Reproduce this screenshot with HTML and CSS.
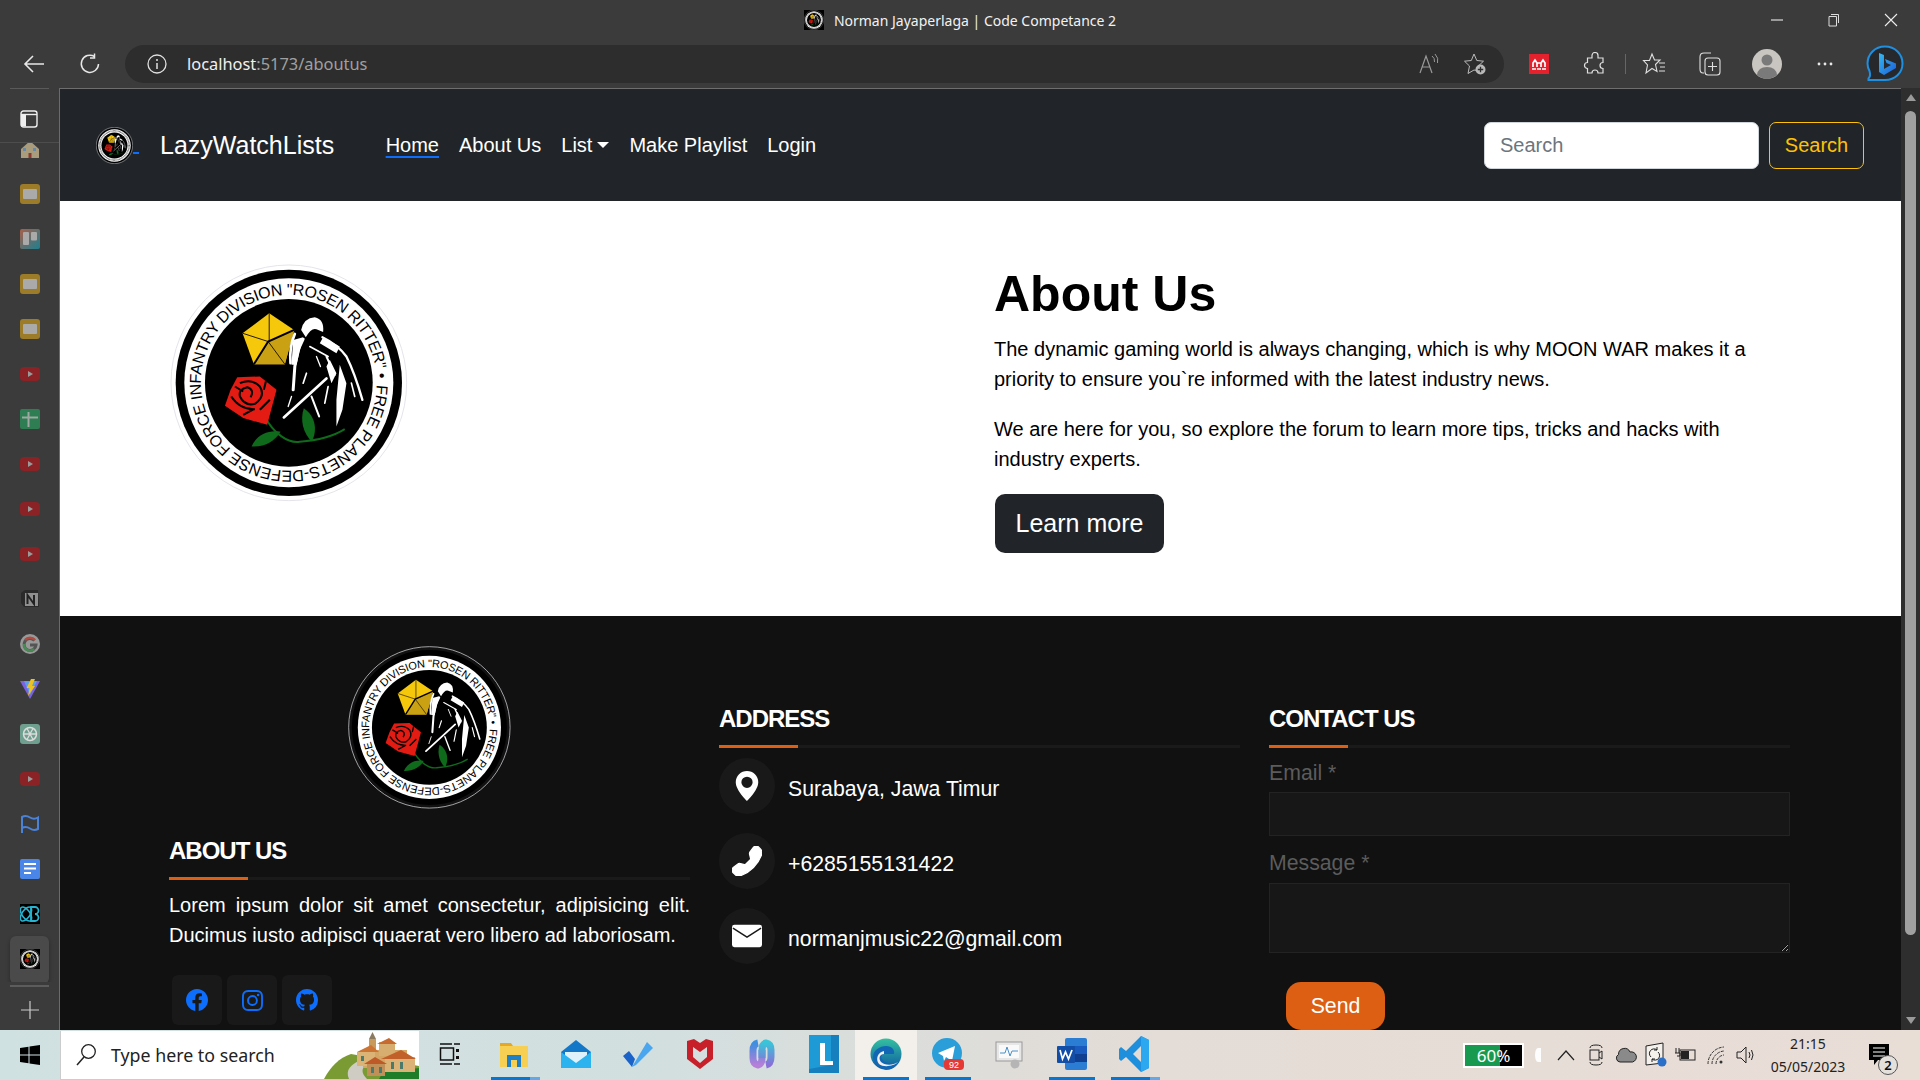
FILE: index.html
```html
<!DOCTYPE html>
<html lang="en">
<head>
  <meta charset="UTF-8">
  <title>Norman Jayaperlaga | Code Competance 2</title>
  <meta name="viewport" content="width=device-width, initial-scale=1.0">
  <link rel="stylesheet" href="styles.css">
</head>
<body>
  <!-- shared drawings -->
  <svg class="defs" aria-hidden="true">
    <defs>
      <linearGradient id="trelloBg" x1="0" y1="0" x2="1" y2="1"><stop offset="0" stop-color="#a8604c"/><stop offset="1" stop-color="#1d7f8f"/></linearGradient>
      <linearGradient id="edgeBlue" x1="0" y1="0" x2="0" y2="1"><stop offset="0" stop-color="#35c1a0"/><stop offset="1" stop-color="#0c59a4"/></linearGradient>
      <linearGradient id="bingB" x1="0" y1="0" x2="1" y2="1"><stop offset="0" stop-color="#36b8f0"/><stop offset="1" stop-color="#1b5ed8"/></linearGradient>
      <linearGradient id="copilotL" x1="0" y1="0" x2="0" y2="1"><stop offset="0" stop-color="#3c8ee0"/><stop offset="1" stop-color="#b67fd8"/></linearGradient>
      <linearGradient id="copilotR" x1="0" y1="0" x2="0" y2="1"><stop offset="0" stop-color="#39c4d8"/><stop offset="1" stop-color="#8a6fd8"/></linearGradient>
      <path id="sealCircle" d="M651 399 A264 264 0 1 1 123 399 A264 264 0 1 1 651 399"/>
      <symbol id="sealArt" viewBox="30 42 715 715">
        <circle cx="387" cy="399" r="340" fill="#000"/>
        <circle cx="387" cy="399" r="314" fill="#fff"/>
        <circle cx="387" cy="399" r="252" fill="#000"/>
        <polygon points="328,190 403,240 375,343 282,343 248,250" fill="#f6c80c"/>
        <polygon points="325,275 403,240 375,343 282,343" fill="#c9a113"/>
        <path d="M328 190V275M248 250L325 275M325 275L375 343" stroke="#221a00" stroke-width="3" fill="none"/>
        <path d="M282 343L325 275L403 240" stroke="#000" stroke-width="6" fill="none"/>
        <path d="M424 240Q432 204 465 202Q494 208 490 246L470 238Q455 232 438 262Z" fill="#fff"/>
        <path d="M400 270L430 262L410 345L395 345ZM490 262L540 290L530 310L480 280ZM510 330L530 370L515 400L500 350ZM540 345L560 400L548 480L530 530L530 450Z" fill="#fff"/>
        <g fill="none" stroke="#fff" stroke-linecap="round">
          <path d="M405 252Q388 290 392 340" stroke-width="8"/>
          <path d="M430 268L415 300L405 350L400 420" stroke-width="9"/>
          <path d="M488 262Q535 285 560 320Q585 370 608 450" stroke-width="7"/>
          <path d="M450 290L505 320" stroke-width="5"/>
          <path d="M500 320L525 375" stroke-width="6"/>
          <path d="M470 320L482 350" stroke-width="4"/>
          <path d="M575 400L585 440" stroke-width="5"/>
          <path d="M455 440L478 500" stroke-width="6"/>
          <path d="M505 410L495 460" stroke-width="5"/>
          <path d="M430 400L440 370" stroke-width="5"/>
          <path d="M372 503L500 386" stroke-width="8"/>
          <path d="M395 440L385 470" stroke-width="4"/>
        </g>
        <path d="M315 500C340 550 385 582 420 576C470 572 520 560 555 538" stroke="#0f6a1b" stroke-width="6" fill="none"/>
        <path d="M275 590C290 555 325 540 362 546C345 575 315 592 275 590Z" fill="#0f6a1b"/>
        <path d="M432 475C470 500 472 545 456 575C430 550 420 510 432 475Z" fill="#0f6a1b"/>
        <path d="M232 382L300 380L350 420L322 525L250 505L195 468L212 420Z" fill="#e31b12"/>
        <path d="M240 400Q275 385 300 410Q318 440 285 462Q255 470 240 440Q235 418 262 412Q285 420 272 442M214 440Q240 480 285 478M300 480L330 450M250 495L282 478M318 395L312 420M225 410L250 425" stroke="#000" stroke-width="6" fill="none"/>
      </symbol>
      <symbol id="sealLarge" viewBox="30 42 715 715">
        <circle cx="387" cy="399" r="354" fill="none" stroke="#e4e4ea" stroke-width="3"/>
        <use href="#sealArt" x="30" y="42" width="715" height="715"/>
        <text class="seal-text"><textPath href="#sealCircle" textLength="1640" startOffset="6">FREE PLANETS-DEFENSE FORCE INFANTRY DIVISION "ROSEN RITTER" •</textPath></text>
      </symbol>
      <symbol id="sealSmall" viewBox="30 42 715 715">
        <use href="#sealArt" x="30" y="42" width="715" height="715"/>
        <circle cx="387" cy="399" r="283" fill="none" stroke="#666" stroke-width="30" stroke-dasharray="14 10"/>
        <circle cx="387" cy="399" r="352" fill="none" stroke="#ddd" stroke-width="8"/>
      </symbol>
      <symbol id="tileYellow" viewBox="0 0 20 20"><rect width="20" height="20" rx="3" fill="#9c7c28"/><rect x="3" y="5" width="14" height="10" rx="1" fill="#aaa"/></symbol>
      <symbol id="tileTube" viewBox="0 0 20 20"><rect y="3" width="20" height="14" rx="4" fill="#8b2226"/><polygon points="8,7 13,10 8,13" fill="#9a9a9a"/></symbol>
    </defs>
  </svg>

  <div class="window">
    <header class="titlebar">
      <div></div>
      <div class="titlebar-text">
        <span class="favicon"><svg class="fill"><use href="#sealSmall"/></svg></span>
        <span>Norman Jayaperlaga | Code Competance 2</span>
      </div>
      <div class="win-controls">
        <svg width="14" height="14" viewBox="0 0 14 14"><path d="M1 7H13" stroke="#ddd" stroke-width="1.2"/></svg>
        <svg width="14" height="14" viewBox="0 0 14 14"><path d="M4 1.5H11.5V10M2 3.5H9.5V13H2Z" stroke="#ddd" fill="none"/></svg>
        <svg width="14" height="14" viewBox="0 0 14 14"><path d="M1 1L13 13M13 1L1 13" stroke="#eee" stroke-width="1.1"/></svg>
      </div>
    </header>

    <div class="toolbar">
      <div class="tool-cell">
        <svg width="22" height="20" viewBox="0 0 22 20"><path d="M21 10H2M10 2L2 10L10 18" stroke="#e8e8e8" stroke-width="1.6" fill="none"/></svg>
      </div>
      <div class="tool-cell">
        <svg width="22" height="22" viewBox="0 0 22 22"><path d="M15.5 3.5A8.6 8.6 0 1 0 19.5 11" stroke="#e8e8e8" stroke-width="1.5" fill="none"/><path d="M15.5 0.5V5H11" stroke="#e8e8e8" stroke-width="1.5" fill="none"/></svg>
      </div>
      <div class="address">
        <svg width="20" height="20" viewBox="0 0 20 20"><circle cx="10" cy="10" r="9" stroke="#e0e0e0" stroke-width="1.3" fill="none"/><path d="M10 9V15" stroke="#e0e0e0" stroke-width="1.5"/><circle cx="10" cy="6" r="1" fill="#e0e0e0"/></svg>
        <div class="address-url">localhost<span class="address-dim">:5173/aboutus</span></div>
        <div class="address-tools">
          <svg width="22" height="22" viewBox="0 0 22 22"><path d="M2 20L8 3L14 20M4.500 14H11.500" stroke="#999" stroke-width="1.2" fill="none"/><path d="M14 3Q17 5 16.500 9M17 1Q21 5 19.500 10" stroke="#999" fill="none"/></svg>
          <svg width="24" height="24" viewBox="0 0 24 24"><path d="M11 2L13.800 8.500L20.500 9.200L15.500 13.800L16.500 19L11 18L5 21.500L6.500 14L1.500 9.200L8.300 8.500Z" stroke="#bbb" stroke-width="1" fill="none"/><circle cx="17.500" cy="17.500" r="5" fill="#b8b8b8"/><path d="M17.500 14.800V20.200M14.800 17.500H20.200" stroke="#2d2d2d" stroke-width="1.300"/></svg>
        </div>
      </div>
      <div class="tool-cell">
        <svg width="20" height="20" viewBox="0 0 20 20"><rect width="20" height="20" fill="#e6212e"/><path d="M4 13V9L6 6L8 9V13M12 13V9L14 6L16 9V13M8 9H12M3 15H7M8 15H12M13 15H17" stroke="#fff" stroke-width="1.700" fill="none"/></svg>
      </div>
      <div class="tool-cell">
        <svg width="24" height="24" viewBox="0 0 24 24"><path d="M9 3.500A3 3 0 0 1 15 3.500V6H20V10.500A3 3 0 0 0 20 16.500V21H15A3 3 0 0 0 9 21H4.500V16.500A3 3 0 0 1 4.500 10.500V6H9Z" stroke="#e0e0e0" stroke-width="1.200" fill="none"/></svg>
      </div>
      <div class="tool-sep"></div>
      <div class="tool-cell">
        <svg width="24" height="24" viewBox="0 0 24 24"><path d="M10 2L12.500 8H18L13.500 12.500L15 19.500L10 16.500L4 21L5.500 13L1.500 8.500H7.500Z" stroke="#e0e0e0" stroke-width="1.100" fill="none"/><path d="M17 11H23M18 15H23M17 19H23" stroke="#e0e0e0" stroke-width="1.100"/></svg>
      </div>
      <div class="tool-cell">
        <svg width="24" height="26" viewBox="0 0 24 26"><path d="M6 22H5Q2 22 2 18V6Q2 2 6 2H13" stroke="#e0e0e0" stroke-width="1.100" fill="none"/><rect x="7" y="7" width="15" height="17" rx="3" stroke="#e0e0e0" stroke-width="1.100" fill="#3b3b3b"/><path d="M14.500 11V20M10 15.500H19" stroke="#e0e0e0" stroke-width="1.100"/></svg>
      </div>
      <div class="tool-cell tool-cell-wide">
        <svg width="30" height="30" viewBox="0 0 30 30"><circle cx="15" cy="15" r="15" fill="#c9c5c0"/><circle cx="15" cy="11" r="5.500" fill="#7a7a7a"/><path d="M5 26Q6 18 15 18Q24 18 25 26Q20 30 15 30Q10 30 5 26Z" fill="#7a7a7a"/></svg>
      </div>
      <div class="tool-cell tool-cell-wide">
        <svg width="18" height="6" viewBox="0 0 18 6"><circle cx="3" cy="3" r="1.400" fill="#e8e8e8"/><circle cx="9" cy="3" r="1.400" fill="#e8e8e8"/><circle cx="15" cy="3" r="1.400" fill="#e8e8e8"/></svg>
      </div>
      <div class="tool-cell tool-cell-bing">
        <svg width="38" height="38" viewBox="0 0 38 38"><path d="M19 1.500C29 1.500 36.500 9 36.500 18.500C36.500 28 29 35 19 35H2.500V33.500Q5 31 3.500 26Q1.500 22.500 1.500 18.500C1.500 9 9 1.500 19 1.500Z" stroke="#1f8fe0" stroke-width="2" fill="#26282c"/><path d="M13 8L18 10V24L25 20L20.500 18L19 14L30 18.500V23L18 30L13 27Z" fill="url(#bingB)"/></svg>
      </div>
    </div>

    <div class="main">
      <aside class="sidebar">
        <div class="sidebar-top">
          <svg width="18" height="18" viewBox="0 0 18 18"><rect x="1" y="1" width="16" height="16" rx="2.500" stroke="#eee" stroke-width="1.400" fill="none"/><path d="M1 4.500H17" stroke="#eee" stroke-width="1.400"/><rect x="1" y="4.500" width="5" height="12" fill="#eee"/></svg>
        </div>
        <div class="tab-list">
          <div class="tab tab-clipped">
            <svg class="tab-ico" viewBox="0 0 20 20"><path d="M1 10L10 2L19 10V19H1Z" fill="#a89c7c"/><rect x="3" y="9" width="3" height="3" fill="#6688aa"/><rect x="13" y="9" width="3" height="3" fill="#6688aa"/><rect x="8.500" y="14" width="3" height="5" fill="#8a3a30"/></svg>
          </div>
          <div class="tab"><svg class="tab-ico"><use href="#tileYellow"/></svg></div>
          <div class="tab"><svg class="tab-ico" viewBox="0 0 20 20"><rect width="20" height="20" rx="2" fill="url(#trelloBg)"/><rect x="3" y="3" width="6" height="13" rx="1" fill="#aaa"/><rect x="11" y="3" width="6" height="8.500" rx="1" fill="#aaa"/></svg></div>
          <div class="tab"><svg class="tab-ico"><use href="#tileYellow"/></svg></div>
          <div class="tab"><svg class="tab-ico"><use href="#tileYellow"/></svg></div>
          <div class="tab"><svg class="tab-ico"><use href="#tileTube"/></svg></div>
          <div class="tab"><svg class="tab-ico" viewBox="0 0 20 20"><rect width="20" height="20" rx="2" fill="#2f7d53"/><path d="M2 8.500H18M8.500 3V18" stroke="#9fa8a2" stroke-width="2"/></svg></div>
          <div class="tab"><svg class="tab-ico"><use href="#tileTube"/></svg></div>
          <div class="tab"><svg class="tab-ico"><use href="#tileTube"/></svg></div>
          <div class="tab"><svg class="tab-ico"><use href="#tileTube"/></svg></div>
          <div class="tab"><svg class="tab-ico" viewBox="0 0 20 20"><path d="M1 4L5 1H18L19 18H4L1 14Z" fill="#2a2a2a"/><rect x="5" y="4" width="13" height="13" fill="#8f8f8f"/><path d="M7.500 15V6L14 15V6" stroke="#222" stroke-width="2" fill="none"/></svg></div>
          <div class="tab"><svg class="tab-ico" viewBox="0 0 20 20"><circle cx="10" cy="10" r="10" fill="#999"/><path d="M14.500 6.500A6 6 0 1 0 16 11H10" stroke="#555" stroke-width="3" fill="none"/><path d="M15 6A6.500 6.500 0 0 0 5 6" stroke="#b24a40" stroke-width="2.500" fill="none"/><path d="M4 10A6 6 0 0 0 14 15" stroke="#4a8a55" stroke-width="2.500" fill="none"/></svg></div>
          <div class="tab"><svg class="tab-ico" viewBox="0 0 20 20"><polygon points="0,2 20,2 10,20" fill="#7d62e0"/><polygon points="4,2 17,2 10,16" fill="#5aa0e8"/><polygon points="11,0 15,0 12,7 15,7 8,17 9.500,9 6.500,9" fill="#eec020"/></svg></div>
          <div class="tab"><svg class="tab-ico" viewBox="0 0 20 20"><rect width="20" height="20" rx="3" fill="#6f9f8f"/><circle cx="10" cy="10" r="6.500" stroke="#dcdcdc" stroke-width="1.500" fill="none"/><path d="M7 4.500L13 15.500M13 4.500L7 15.500M3.500 10H16.500" stroke="#dcdcdc" stroke-width="1.300"/></svg></div>
          <div class="tab"><svg class="tab-ico"><use href="#tileTube"/></svg></div>
          <div class="tab"><svg class="tab-ico" viewBox="0 0 20 20"><path d="M2 19V3Q6 1 10 3.500Q14 6 18 3.500V15Q14 17 10 14.500Q6 12 2 14" stroke="#4a82d8" stroke-width="2" fill="none"/></svg></div>
          <div class="tab"><svg class="tab-ico" viewBox="0 0 20 20"><rect width="20" height="20" rx="2" fill="#4a86e8"/><path d="M4 5H16M4 9.500H16M4 14H11" stroke="#fff" stroke-width="2"/></svg></div>
          <div class="tab"><svg class="tab-ico" viewBox="0 0 20 20"><rect width="20" height="20" fill="#000"/><ellipse cx="6" cy="10" rx="4" ry="8" stroke="#27b4d0" stroke-width="1.500" fill="none" transform="rotate(35 6 10)"/><ellipse cx="6" cy="10" rx="4" ry="8" stroke="#27b4d0" stroke-width="1.500" fill="none" transform="rotate(-35 6 10)"/><path d="M11 3H15A3.500 3.500 0 0 1 15 10A3.500 3.500 0 0 1 15 17H11Z" stroke="#27b4d0" stroke-width="1.800" fill="none"/></svg></div>
          <div class="tab tab-active"><span class="tab-seal"><svg class="fill"><use href="#sealSmall"/></svg></span></div>
        </div>
        <div class="sidebar-rule"></div>
        <div class="sidebar-add">
          <svg width="18" height="18" viewBox="0 0 18 18"><path d="M9 0V18M0 9H18" stroke="#ccc" stroke-width="1.200"/></svg>
        </div>
      </aside>

      <div class="page">
        <nav class="navbar">
          <a class="brand-logo"><svg class="fill"><use href="#sealSmall"/></svg></a>
          <span class="brand-gap"></span>
          <a class="brand">LazyWatchLists</a>
          <ul class="nav-links">
            <li class="nav-link nav-link-active">Home</li>
            <li class="nav-link">About Us</li>
            <li class="nav-link nav-caret">List</li>
            <li class="nav-link">Make Playlist</li>
            <li class="nav-link">Login</li>
          </ul>
          <form class="nav-search">
            <input class="nav-search-input" type="text" placeholder="Search">
            <button class="nav-search-btn" type="button">Search</button>
          </form>
        </nav>

        <section class="about">
          <svg class="about-img"><use href="#sealLarge"/></svg>
          <div class="about-text">
            <h1>About Us</h1>
            <p>The dynamic gaming world is always changing, which is why MOON WAR makes it a priority to ensure you`re informed with the latest industry news.</p>
            <p>We are here for you, so explore the forum to learn more tips, tricks and hacks with industry experts.</p>
            <button class="learn-btn" type="button">Learn more</button>
          </div>
        </section>

        <footer class="footer">
          <div class="footer-col footer-col-about">
            <svg class="footer-logo"><use href="#sealLarge"/></svg>
            <h4 class="footer-title">ABOUT US</h4>
            <p class="footer-lorem">Lorem ipsum dolor sit amet consectetur, adipisicing elit. Ducimus iusto adipisci quaerat vero libero ad laboriosam.</p>
            <div class="socials">
              <a class="social"><svg width="22" height="22" viewBox="0 0 16 16" fill="#0d6efd"><path d="M16 8.049c0-4.446-3.582-8.05-8-8.05C3.58 0-.002 3.603-.002 8.05c0 4.017 2.926 7.347 6.75 7.951v-5.625h-2.03V8.05H6.75V6.275c0-2.017 1.195-3.131 3.022-3.131.876 0 1.791.157 1.791.157v1.98h-1.009c-.993 0-1.303.621-1.303 1.258v1.51h2.218l-.354 2.326H9.25V16c3.824-.604 6.75-3.934 6.75-7.951z"/></svg></a>
              <a class="social"><svg width="21" height="21" viewBox="0 0 16 16" fill="#0d6efd"><path d="M8 0C5.829 0 5.556.01 4.703.048 3.85.088 3.269.222 2.76.42a3.917 3.917 0 0 0-1.417.923A3.927 3.927 0 0 0 .42 2.76C.222 3.268.087 3.85.048 4.7.01 5.555 0 5.827 0 8.001c0 2.172.01 2.444.048 3.297.04.852.174 1.433.372 1.942.205.526.478.972.923 1.417.444.445.89.719 1.416.923.51.198 1.09.333 1.942.372C5.555 15.99 5.827 16 8 16s2.444-.01 3.298-.048c.851-.04 1.434-.174 1.943-.372a3.916 3.916 0 0 0 1.416-.923c.445-.445.718-.891.923-1.417.197-.509.332-1.09.372-1.942C15.99 10.445 16 10.173 16 8s-.01-2.445-.048-3.299c-.04-.851-.175-1.433-.372-1.941a3.926 3.926 0 0 0-.923-1.417A3.911 3.911 0 0 0 13.24.42c-.51-.198-1.092-.333-1.943-.372C10.443.01 10.172 0 7.998 0h.003zm-.717 1.442h.718c2.136 0 2.389.007 3.232.046.78.035 1.204.166 1.486.275.373.145.64.319.92.599.28.28.453.546.598.92.11.281.24.705.275 1.485.039.843.047 1.096.047 3.231s-.008 2.389-.047 3.232c-.035.78-.166 1.203-.275 1.485a2.47 2.47 0 0 1-.599.919c-.28.28-.546.453-.92.598-.28.11-.704.24-1.485.276-.843.038-1.096.047-3.232.047s-2.39-.009-3.233-.047c-.78-.036-1.203-.166-1.485-.276a2.478 2.478 0 0 1-.92-.598 2.48 2.48 0 0 1-.6-.92c-.109-.281-.24-.705-.275-1.485-.038-.843-.046-1.096-.046-3.233 0-2.136.008-2.388.046-3.231.036-.78.166-1.204.276-1.486.145-.373.319-.64.599-.92.28-.28.546-.453.92-.598.282-.11.705-.24 1.485-.276.738-.034 1.024-.044 2.515-.045v.002zm4.988 1.328a.96.96 0 1 0 0 1.92.96.96 0 0 0 0-1.92zm-4.27 1.122a4.109 4.109 0 1 0 0 8.217 4.109 4.109 0 0 0 0-8.217zm0 1.441a2.667 2.667 0 1 1 0 5.334 2.667 2.667 0 0 1 0-5.334z"/></svg></a>
              <a class="social"><svg width="22" height="22" viewBox="0 0 16 16" fill="#0d6efd"><path d="M8 0C3.58 0 0 3.58 0 8c0 3.54 2.29 6.53 5.47 7.59.4.07.55-.17.55-.38 0-.19-.01-.82-.01-1.49-2.01.37-2.53-.49-2.69-.94-.09-.23-.48-.94-.82-1.13-.28-.15-.68-.52-.01-.53.63-.01 1.08.58 1.23.82.72 1.21 1.87.87 2.33.66.07-.52.28-.87.51-1.07-1.78-.2-3.64-.89-3.64-3.95 0-.87.31-1.59.82-2.15-.08-.2-.36-1.02.08-2.12 0 0 .67-.21 2.2.82.64-.18 1.32-.27 2-.27.68 0 1.36.09 2 .27 1.53-1.04 2.2-.82 2.2-.82.44 1.1.16 1.92.08 2.12.51.56.82 1.27.82 2.15 0 3.07-1.87 3.75-3.65 3.95.29.25.54.73.54 1.48 0 1.07-.01 1.93-.01 2.2 0 .21.15.46.55.38A8.012 8.012 0 0 0 16 8c0-4.42-3.58-8-8-8z"/></svg></a>
            </div>
          </div>

          <div class="footer-col footer-col-low">
            <h4 class="footer-title">ADDRESS</h4>
            <div class="address-rows">
              <div class="address-row">
                <span class="address-ico"><svg width="30" height="30" viewBox="0 0 16 16" fill="#fff"><path d="M8 16s6-5.686 6-10A6 6 0 0 0 2 6c0 4.314 6 10 6 10zm0-7a3 3 0 1 1 0-6 3 3 0 0 1 0 6z"/></svg></span>
                <span class="address-val">Surabaya, Jawa Timur</span>
              </div>
              <div class="address-row">
                <span class="address-ico"><svg class="flip" width="30" height="30" viewBox="0 0 16 16" fill="#fff" stroke="#fff" stroke-width=".7"><path d="M1.885.511a1.745 1.745 0 0 1 2.61.163L6.29 2.98c.329.423.445.974.315 1.494l-.547 2.19a.678.678 0 0 0 .178.643l2.457 2.457a.678.678 0 0 0 .644.178l2.189-.547a1.745 1.745 0 0 1 1.494.315l2.306 1.794c.829.645.905 1.87.163 2.611l-1.034 1.034c-.74.74-1.846 1.065-2.877.702a18.634 18.634 0 0 1-7.01-4.42 18.634 18.634 0 0 1-4.42-7.009c-.362-1.03-.037-2.137.703-2.877L1.885.511z"/></svg></span>
                <span class="address-val">+6285155131422</span>
              </div>
              <div class="address-row">
                <span class="address-ico"><svg width="30" height="30" viewBox="0 0 16 16"><rect y="2" width="16" height="12" rx="1.300" fill="#fff"/><path d="M0.500 3.800L8 8.600L15.500 3.800" stroke="#191919" stroke-width=".8" fill="none"/></svg></span>
                <span class="address-val">normanjmusic22@gmail.com</span>
              </div>
            </div>
          </div>

          <div class="footer-col footer-col-low">
            <h4 class="footer-title">CONTACT US</h4>
            <form class="contact-form">
              <label class="contact-label">Email *</label>
              <input class="contact-input" type="text">
              <label class="contact-label contact-label-second">Message *</label>
              <textarea class="contact-area"></textarea>
              <button class="send-btn" type="button">Send</button>
            </form>
          </div>
        </footer>
      </div>

      <div class="scrollbar">
        <span class="scroll-up"></span>
        <span class="scroll-thumb"></span>
        <span class="scroll-down"></span>
      </div>
    </div>

    <div class="taskbar">
      <div class="start">
        <svg width="20" height="20" viewBox="0 0 20 20" fill="#000"><path d="M0 3L8.500 1.800V9.500H0ZM9.500 1.600L20 0V9.500H9.500ZM0 10.500H8.500V18.200L0 17ZM9.500 10.500H20V20L9.500 18.400Z"/></svg>
      </div>
      <div class="task-search">
        <svg width="22" height="24" viewBox="0 0 22 24"><circle cx="13.500" cy="8.500" r="6.800" stroke="#222" stroke-width="1.300" fill="none"/><path d="M9 14L2 22" stroke="#222" stroke-width="1.500"/></svg>
        <span class="task-search-text">Type here to search</span>
        <svg class="task-search-art" width="96" height="49" viewBox="0 0 96 49">
          <path d="M1 49C8 36 16 28 28 24L96 36V49Z" fill="#7a9a34"/>
          <path d="M26 49C22 40 28 34 38 30L44 34C38 38 38 43 44 49Z" fill="#cfccc4"/>
          <path d="M60 42L96 38V49H56Z" fill="#1f7d2a"/>
          <rect x="46" y="9" width="7" height="18" fill="#c89a5c"/>
          <polygon points="46,9 53,9 49.500,2" fill="#8a7a60"/>
          <rect x="40" y="20" width="44" height="18" fill="#d4a666"/>
          <rect x="56" y="12" width="16" height="14" fill="#d8ae70"/>
          <polygon points="54,14 74,14 66,8" fill="#c76a30"/>
          <polygon points="34,22 56,22 48,15" fill="#cc7433"/>
          <rect x="34" y="22" width="18" height="14" fill="#dcb377"/>
          <rect x="62" y="27" width="30" height="15" fill="#dcb377"/>
          <polygon points="58,29 93,29 78,20" fill="#c2602a"/>
          <rect x="44" y="33" width="18" height="13" fill="#c09058"/>
          <polygon points="41,34 64,34 52,27" fill="#bd5a28"/>
          <path d="M68 32h3v7h-3zM77 32h3v7h-3zM48 37h3v6h-3zM56 37h3v6h-3zM38 26h3v5h-3z" fill="#4c7a6a"/>
        </svg>
      </div>

      <div class="task-apps">
        <div class="task-app task-app-first"><svg width="24" height="26" viewBox="0 0 24 26"><path d="M2 3H14M2 23H14M16 3H22M16 23H22" stroke="#111" stroke-width="1.500"/><rect x="2.500" y="7" width="13" height="12" stroke="#111" stroke-width="1.500" fill="none"/><path d="M19.500 8V11M19.500 15V18" stroke="#111" stroke-width="3"/></svg></div>
        <div class="task-app task-app-open task-app-split"><svg width="28" height="28" viewBox="0 0 28 28"><path d="M0 3H11L13 6H0Z" fill="#e4a726"/><rect y="6" width="28" height="21" fill="#f7cf52"/><rect x="7" y="15" width="14" height="12" fill="#1f80c8"/><rect x="11" y="20" width="6" height="7" fill="#f7cf52"/></svg></div>
        <div class="task-app"><svg width="30" height="30" viewBox="0 0 30 30"><polygon points="15,1 30,13 30,29 0,29 0,13" fill="#1478c8"/><polygon points="4,13 26,13 26,21 15,27 4,21" fill="#dff2fb"/><polygon points="0,13 15,24 30,13 30,29 0,29" fill="#2bb3ef"/></svg></div>
        <div class="task-app"><svg width="32" height="26" viewBox="0 0 32 26"><polygon points="1,15 7,10 13,18 10,26" fill="#1a63c8"/><polygon points="10,26 25,1 31,7 14,24" fill="#4aa6ee"/></svg></div>
        <div class="task-app"><svg width="26" height="30" viewBox="0 0 26 30"><path d="M0 2L7 0L13 4L19 0L26 2V20L13 30L0 20ZM6 8V18L13 24L20 18V8L13 13Z" fill="#c8202a" fill-rule="evenodd"/></svg></div>
        <div class="task-app"><svg width="26" height="30" viewBox="0 0 26 30"><path d="M9 4Q4 5 4 12V19Q4 25 9 26Q13 25 13 19V11" stroke="url(#copilotL)" stroke-width="7" fill="none"/><path d="M17 26Q22 25 22 18V11Q22 5 17 4Q13 5 13 11V19" stroke="url(#copilotR)" stroke-width="7" fill="none"/></svg></div>
        <div class="task-app"><svg width="30" height="38" viewBox="0 0 30 38"><rect width="30" height="38" fill="#1e9ad6"/><polygon points="22,0 30,0 30,38 0,38 0,34 22,30" fill="#1580bd"/><path d="M11 8H16V26H24V30H11Z" fill="#fff"/></svg></div>
        <div class="task-app task-app-open task-app-current"><svg width="32" height="32" viewBox="0 0 32 32"><circle cx="16" cy="16" r="15.500" fill="url(#edgeBlue)"/><path d="M3 19C3 12 10 8 16 8C22 8 25 12 24 16H14C11 16 10 20 14 23C20 27 26 26 29 23C27 29 21 32 16 32C10 30 3 26 3 19Z" fill="#1267b5"/><path d="M14 16C10 16 8 20 11 24C14 27 22 28 28 24C24 28 14 30 9 26C5 21 8 14 14 13Z" fill="#f3efea"/></svg></div>
        <div class="task-app task-app-open"><svg width="34" height="34" viewBox="0 0 34 34"><circle cx="16" cy="16" r="15" fill="#2a9ed8"/><path d="M7 16L24 9L21 24L15 20L13 24L12 19Z" fill="#fff"/><rect x="13" y="22" width="20" height="11" rx="4" fill="#e53935"/><text class="tg-count" x="23" y="31">92</text></svg></div>
        <div class="task-app"><svg width="30" height="30" viewBox="0 0 30 30"><rect x="1" y="3" width="26" height="19" fill="#e6e6e6" stroke="#999"/><rect x="4" y="6" width="20" height="13" fill="#f9f9f9"/><path d="M5 14L10 14L12 8L15 17L17 12L23 12" stroke="#4a90c8" fill="none"/><circle cx="20" cy="25" r="4.500" fill="#b5b5b5"/></svg></div>
        <div class="task-app task-app-open"><svg width="30" height="32" viewBox="0 0 30 32"><rect x="8" width="22" height="32" rx="2" fill="#2b7cd3"/><rect x="8" y="8" width="22" height="8" fill="#185abd"/><rect x="8" y="16" width="22" height="8" fill="#103f91"/><rect y="8" width="18" height="17" rx="1" fill="#124ea8"/><path d="M3 12L5.500 21L8.500 14L11.500 21L15 12" stroke="#fff" stroke-width="1.700" fill="none"/></svg></div>
        <div class="task-app task-app-open task-app-split"><svg width="30" height="36" viewBox="0 0 30 36"><path d="M22 0L30 4V32L22 36L7 21L2 25L0 23V13L2 11L7 15ZM22 10L14 18L22 26Z" fill="#1e8fdc" fill-rule="evenodd"/><path d="M22 0L30 4V32L22 36Z" fill="#2ba8f0"/></svg></div>
      </div>

      <div class="tray">
        <div class="battery">
          <span class="battery-text">60%</span>
        </div>
        <div class="tray-speck"><span></span></div>
        <div class="tray-ico"><svg width="18" height="12" viewBox="0 0 18 12"><path d="M1 11L9 2L17 11" stroke="#222" stroke-width="1.200" fill="none"/></svg></div>
        <div class="tray-ico"><svg width="16" height="22" viewBox="0 0 16 22"><path d="M2 4Q2 1 8 1Q14 1 14 4M2 18Q2 21 8 21Q14 21 14 18" stroke="#222" fill="none"/><rect x="2" y="6" width="9" height="10" stroke="#222" fill="none"/><path d="M11 9L14 7V15L11 13" stroke="#222" fill="none"/></svg></div>
        <div class="tray-ico"><svg width="22" height="18" viewBox="0 0 22 18"><path d="M5 16A4 4 0 0 1 3.500 8.500A6 6 0 0 1 15 6A4.500 4.500 0 0 1 17.500 16Z" stroke="#222" fill="#8a8a8a"/></svg></div>
        <div class="tray-ico"><svg width="22" height="26" viewBox="0 0 22 26"><path d="M1 4L18 1V21L1 23Z" stroke="#222" fill="#f4f0ec"/><path d="M6 15A4 4 0 0 1 12 8M13 10A4 4 0 0 1 7 17M12 5V8H9M7 20V17H10" stroke="#222" fill="none"/><circle cx="17" cy="20" r="4.500" fill="#2b6fc8"/></svg></div>
        <div class="tray-ico"><svg width="22" height="18" viewBox="0 0 22 18"><rect x="5" y="4" width="15" height="10" stroke="#222" fill="none"/><rect x="6" y="5" width="8" height="8" fill="#222"/><path d="M1 2V7M4 2V7M0 7H5V10H2" stroke="#222" fill="none"/></svg></div>
        <div class="tray-ico"><svg width="20" height="20" viewBox="0 0 20 20"><path d="M2 19A17 17 0 0 1 18 2M6 19A13 13 0 0 1 18 6M10 19A9 9 0 0 1 18 10" stroke="#333" fill="none" stroke-dasharray="3 1"/><circle cx="15" cy="17" r="1.500" fill="#333"/></svg></div>
        <div class="tray-ico"><svg width="20" height="20" viewBox="0 0 20 20"><path d="M1 7H5L10 2V18L5 13H1Z" stroke="#222" fill="none"/><path d="M13 7Q15 10 13 13M15.500 5Q18.500 10 15.500 15" stroke="#222" fill="none"/></svg></div>
        <div class="clock"><span>21:15</span><span>05/05/2023</span></div>
        <div class="notif">
          <svg width="20" height="22" viewBox="0 0 20 22"><path d="M0 0H20V16H9L5 21V16H0Z" fill="#000"/><path d="M4 4H16M4 8H16M4 12H16" stroke="#fff" stroke-width="1.200"/></svg>
          <span class="notif-badge">2</span>
        </div>
      </div>
    </div>
  </div>
</body>
</html>
```

FILE: styles.css
```css
* { box-sizing: border-box; }
html, body { margin: 0; padding: 0; }
body { width: 1920px; height: 1080px; overflow: hidden; font-family: "Liberation Sans", Arial, sans-serif; background: #3b3b3b; }
svg { display: block; flex-shrink: 0; }
.defs { position: absolute; width: 0; height: 0; }
.fill { width: 100%; height: 100%; }
.seal-text { font-family: "Liberation Sans", Arial, sans-serif; font-size: 48px; fill: #000; }
.tg-count { font-family: "Liberation Sans", Arial, sans-serif; font-size: 9px; fill: #fff; text-anchor: middle; }

.window { display: flex; flex-direction: column; width: 1920px; height: 1080px; }

/* browser chrome */
.titlebar { display: grid; grid-template-columns: 1fr auto 1fr; align-items: center; height: 44px; padding-bottom: 4px; background: #3b3b3b; }
.titlebar-text { display: flex; align-items: center; gap: 10px; color: #f2f2f2; font-family: "Noto Sans", sans-serif; font-size: 14px; }
.favicon { width: 20px; height: 20px; background: #000; }
.win-controls { display: flex; justify-content: flex-end; gap: 43px; padding-right: 22px; }

.toolbar { display: flex; align-items: flex-start; height: 44px; padding-top: 1px; padding-left: 6px; background: #3b3b3b; }
.tool-cell { display: flex; align-items: center; justify-content: center; width: 56px; height: 38px; }
.tool-cell-wide { width: 58px; }
.tool-cell-bing { width: 62px; }
.tool-sep { width: 1px; height: 20px; margin-top: 9px; margin-left: 2px; background: #666; }
.address { display: flex; align-items: center; width: 1379px; height: 38px; margin-left: 7px; margin-right: 7px; padding-left: 22px; padding-right: 17px; background: #2d2d2d; border-radius: 19px; }
.address-url { margin-left: 20px; padding-bottom: 1px; color: #f0f0f0; font-family: "Noto Sans", sans-serif; font-size: 16.4px; }
.address-dim { color: #a0a0a0; }
.address-tools { display: flex; align-items: center; gap: 23px; margin-left: auto; }

.main { display: flex; height: 942px; overflow: hidden; }

.sidebar { display: flex; flex-direction: column; flex: 0 0 60px; border-right: 1px solid #6b6b6b; background: #3b3b3b; overflow: hidden; }
.sidebar-top { display: flex; align-items: center; justify-content: center; flex: 0 0 54px; margin: 0 10px; padding-top: 7px; padding-right: 1px; border-top: 1px solid #5a5a5a; }
.tab-list { flex: 0 0 840px; overflow: hidden; border-top: 1px solid #4d4d4d; }
.tab { display: flex; align-items: center; justify-content: center; height: 45px; }
.tab-clipped { margin-top: -16.5px; }
.tab-ico { width: 20px; height: 20px; }
.tab-active { position: relative; }
.tab-active::before { content: ""; position: absolute; left: 10px; right: 10px; top: -1px; bottom: -2px; background: #4a4a4a; border-radius: 6px; box-shadow: 0 2px 4px rgba(0, 0, 0, .3); }
.tab-seal { position: relative; width: 20px; height: 20px; background: #000; }
.sidebar-rule { height: 2px; margin: 3px 10px 0; background: #5c5c5c; }
.sidebar-add { display: flex; flex: 1; align-items: center; justify-content: center; padding-top: 3px; }

.scrollbar { display: flex; flex-direction: column; align-items: center; flex: 0 0 19px; background: #2e2e2e; }
.scroll-up { width: 0; height: 0; margin-top: 6px; border-left: 5px solid transparent; border-right: 5px solid transparent; border-bottom: 7px solid #9a9a9a; }
.scroll-thumb { width: 11px; height: 824px; margin-top: 10px; background: #a0a0a0; border-radius: 6px; }
.scroll-down { width: 0; height: 0; margin-top: auto; margin-bottom: 6px; border-left: 5px solid transparent; border-right: 5px solid transparent; border-top: 7px solid #9a9a9a; }

/* the site */
.page { flex: 1; min-width: 0; height: 942px; overflow: hidden; background: #fff; }

.navbar { display: flex; align-items: center; height: 113px; padding-left: 36px; padding-right: 37px; background: #212529; border-top: 1px solid #6e6e6e; }
.brand-logo { width: 37px; height: 37px; }
.brand-gap { align-self: center; width: 6px; height: 2px; margin-top: 15px; background: #0d6efd; }
.brand { margin-left: 21px; color: #fff; font-size: 25px; }
.nav-links { display: flex; margin: 0 0 0 41.500px; padding: 0; list-style: none; }
.nav-link { padding: 0 10px; color: #fff; font-size: 20px; line-height: 30px; }
.nav-link-active { color: #fff; text-decoration: underline; text-decoration-color: #0d6efd; text-decoration-thickness: 2px; text-underline-offset: 4px; }
.nav-caret::after { content: ""; display: inline-block; margin-left: 5px; vertical-align: 4px; border-top: 6px solid #fff; border-left: 6px solid transparent; border-right: 6px solid transparent; }
.nav-search { display: flex; gap: 10px; margin-left: auto; }
.nav-search-input { width: 275px; height: 47px; padding: 0 15px; border: 1px solid #ced4da; border-radius: 7px; background: #fff; font-family: inherit; font-size: 20px; }
.nav-search-input::placeholder { color: #6c757d; }
.nav-search-btn { width: 95px; height: 47px; padding: 0; border: 1px solid #ffc107; border-radius: 7px; background: transparent; color: #ffc107; font-family: inherit; font-size: 20px; }

.about { display: grid; grid-template-columns: 824px 776px; height: 415px; padding: 63px 0 0 110px; background: #fff; color: #000; }
.about-img { width: 238px; height: 238px; }
.about-text h1 { margin: 0 0 10px; font-size: 50px; font-weight: 700; line-height: 60px; }
.about-text p { margin: 0 0 20px; font-size: 20px; line-height: 30px; }
.learn-btn { display: block; width: 169px; height: 59px; margin-left: 1px; padding: 0; border: none; border-radius: 10px; background: #212529; color: #fff; font-family: inherit; font-size: 25px; }

.footer { display: flex; gap: 29px; height: 500px; padding: 30px 0 0 109px; background: #111; color: #fff; }
.footer-col { width: 521px; }
.footer-col-low { padding-top: 59px; }
.footer-logo { width: 163px; height: 163px; margin: 0 auto 28px; }
.footer-title { position: relative; margin: 0; padding-bottom: 12px; border-bottom: 3px solid #1a1a1a; font-size: 24px; font-weight: 700; line-height: 28px; letter-spacing: -1px; }
.footer-title::after { content: ""; position: absolute; left: 0; bottom: -3px; width: 79px; height: 3px; background: #dc5f13; }
.footer-lorem { margin: 10px 0 0; font-size: 20px; line-height: 30px; text-align: justify; }
.socials { display: flex; gap: 5px; margin: 25px 0 0 3px; }
.social { display: flex; align-items: center; justify-content: center; width: 50px; height: 50px; background: #191919; border-radius: 6px; }

.address-rows { display: flex; flex-direction: column; gap: 19px; margin-top: 10px; }
.address-row { display: flex; align-items: center; gap: 13px; }
.address-ico { display: flex; align-items: center; justify-content: center; width: 56px; height: 56px; background: #191919; border-radius: 50%; }
.flip { transform: scaleX(-1); }
.address-val { padding-top: 6px; font-size: 21.25px; line-height: 30px; }

.contact-form { display: flex; flex-direction: column; margin-top: 10px; }
.contact-label { color: #5c5c5c; font-size: 21.25px; line-height: 30px; }
.contact-label-second { margin-top: 12px; }
.contact-input { height: 44px; margin-top: 4px; border: 1px solid #232323; background: #171717; }
.contact-area { height: 70px; margin-top: 5px; border: 1px solid #232323; background: #171717; color: #fff; }
.send-btn { align-self: flex-start; width: 99px; height: 48px; margin: 29px 0 0 17px; padding: 0; border: none; border-radius: 15px; background: #dc5f13; color: #fff; font-family: inherit; font-size: 21.25px; }

/* windows taskbar */
.taskbar { display: flex; align-items: stretch; height: 50px; background: linear-gradient(90deg, #d0e1e2 0%, #d3dfdf 35%, #e4dcd6 60%, #e9ded6 100%); }
.start { display: flex; align-items: center; justify-content: center; flex: 0 0 60px; }
.task-search { position: relative; display: flex; align-items: center; flex: 0 0 359px; margin-top: 1px; padding-left: 14px; background: #fff; border-left: 1px solid #ccc; border-bottom: 1px solid #ccc; overflow: hidden; }
.task-search-text { margin-left: 14px; color: #222; font-family: "Noto Sans", sans-serif; font-size: 17.8px; }
.task-search-art { position: absolute; right: 0; bottom: 0; }
.task-apps { display: flex; }
.task-app { position: relative; display: flex; align-items: center; justify-content: center; width: 62px; padding-bottom: 2px; }
.task-app-first { margin-right: 2px; }
.task-app-open::after { content: ""; position: absolute; left: 8px; right: 8px; bottom: 0; height: 3px; background: #0078d4; }
.task-app-split::after { right: 5px; background: linear-gradient(90deg, #0078d4 80%, #62a9e8 80%); }
.task-app-current { background: #f3efea; }

.tray { display: flex; align-items: center; margin-left: auto; padding-right: 26px; color: #222; font-family: "Noto Sans", sans-serif; }
.battery { display: flex; align-items: center; justify-content: center; width: 61px; height: 25px; border: 2px solid #fff; background: linear-gradient(90deg, #179a50 62%, #000 62%); }
.battery-text { color: #fff; font-size: 17px; }
.tray-speck { display: flex; justify-content: center; width: 27px; }
.tray-speck span { width: 6px; height: 14px; background: #fdfdfd; border-radius: 50% 0 0 50%; }
.tray-ico { display: flex; align-items: center; justify-content: center; width: 30px; }
.clock { display: flex; flex-direction: column; align-items: center; gap: 4px; width: 76px; margin-left: 9px; font-size: 14px; line-height: 19px; }
.notif { position: relative; display: flex; justify-content: center; width: 30px; margin-left: 18px; }
.notif-badge { position: absolute; left: 14px; top: 11px; width: 20px; height: 20px; border: 1px solid #555; border-radius: 50%; background: #e4e0dc; color: #111; font-size: 13px; font-weight: 600; line-height: 18px; text-align: center; }
```
